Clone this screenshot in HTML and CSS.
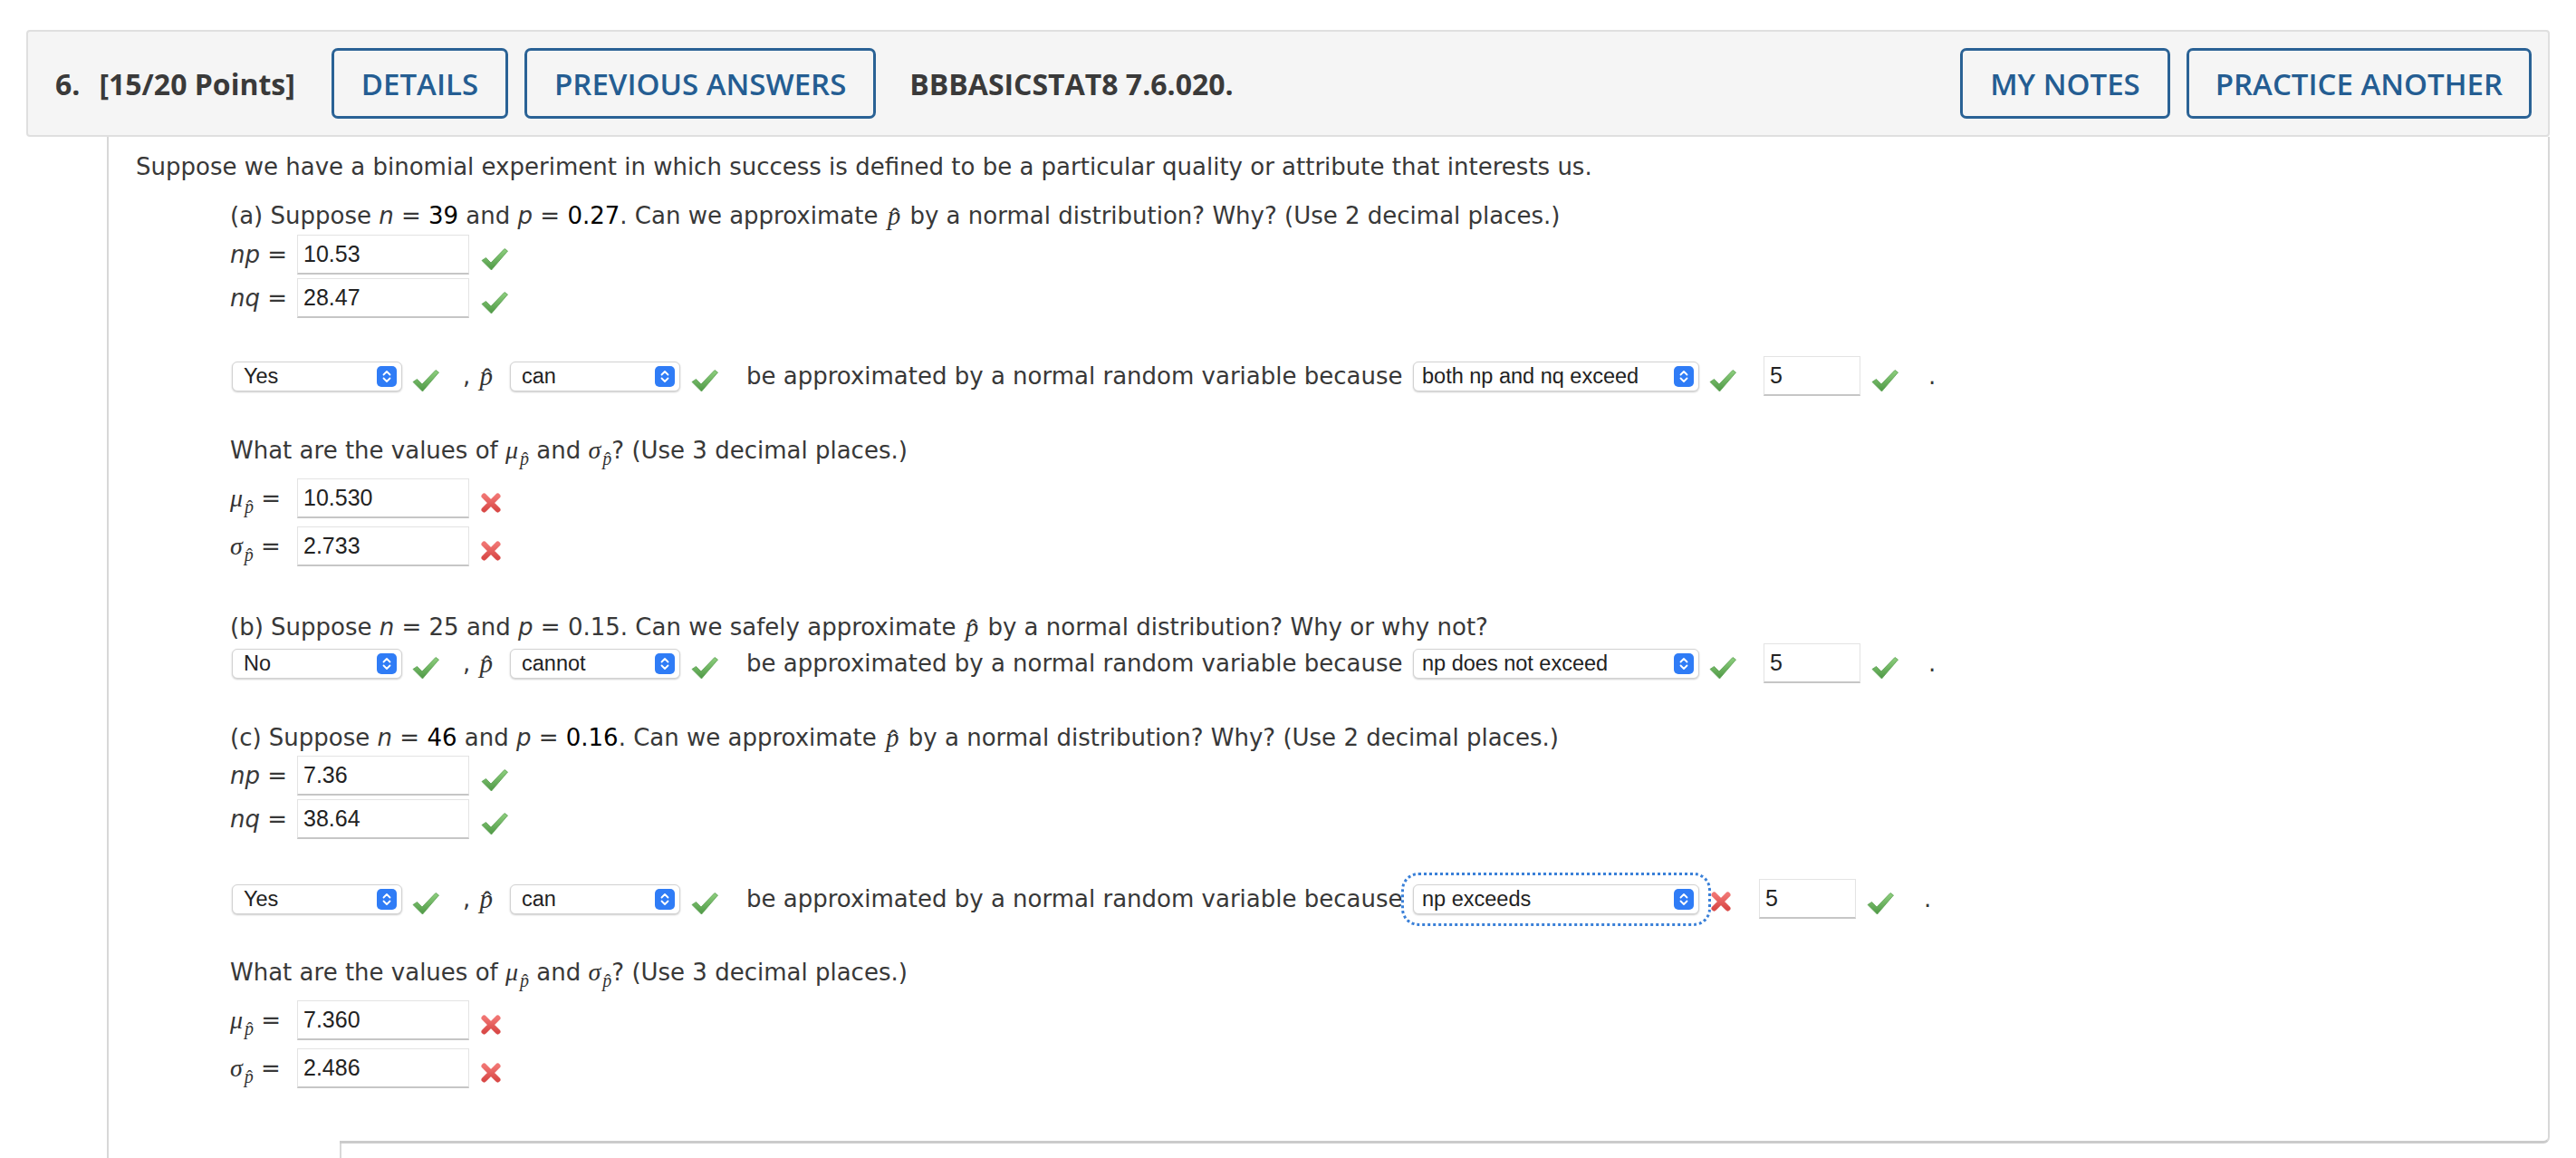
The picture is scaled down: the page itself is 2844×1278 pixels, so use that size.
FILE: index.html
```html
<!DOCTYPE html>
<html>
<head>
<meta charset="utf-8">
<title>Question 6</title>
<link rel="stylesheet" href="styles.css">
</head>
<body>
<div class="question">
  <div class="q-header">
    <div class="q-num"><span class="q-n">6.</span><span>[15/20 Points]</span></div>
    <button class="btn btn-first">DETAILS</button>
    <button class="btn">PREVIOUS ANSWERS</button>
    <div class="q-id">BBBASICSTAT8 7.6.020.</div>
    <div class="spacer"></div>
    <button class="btn">MY NOTES</button>
    <button class="btn btn-last">PRACTICE ANOTHER</button>
  </div>

  <div class="q-body">
    <div class="main">
      <div class="t-row">Suppose we have a binomial experiment in which success is defined to be a particular quality or attribute that interests us.</div>
      <div class="sub">
        <!-- (a) -->
        <div class="t-row mt22">(a) Suppose&nbsp;<i>n</i>&nbsp;=&nbsp;<span class="dk">39</span>&nbsp;and&nbsp;<i>p</i>&nbsp;=&nbsp;<span class="dk">0.27</span>. Can we approximate&nbsp;<span class="pv"><span class="hat">p</span></span>&nbsp;by a normal distribution? Why? (Use 2 decimal places.)</div>
        <div class="f-row mt5"><span class="lbl"><i>np</i>&nbsp;=</span><input class="ans" value="10.53" readonly><svg class="ok" viewBox="0 0 32 26"><use href="#chk"/></svg></div>
        <div class="f-row mt4"><span class="lbl"><i>nq</i>&nbsp;=</span><input class="ans" value="28.47" readonly><svg class="ok" viewBox="0 0 32 26"><use href="#chk"/></svg></div>

        <div class="d-row mt42">
          <div class="sel"><span>Yes</span><svg class="step" viewBox="0 0 22 23"><use href="#stp"/></svg></div>
          <svg class="ok ok-s" viewBox="0 0 32 26"><use href="#chk"/></svg>
          <span class="cp">,&nbsp;<span class="pv"><span class="hat">p</span></span></span>
          <div class="sel"><span>can</span><svg class="step" viewBox="0 0 22 23"><use href="#stp"/></svg></div>
          <svg class="ok ok-s2" viewBox="0 0 32 26"><use href="#chk"/></svg>
          <span class="because">be approximated by a normal random variable because</span>
          <div class="sel sel-wide"><span>both np and nq exceed</span><svg class="step" viewBox="0 0 22 23"><use href="#stp"/></svg></div>
          <svg class="ok ok-s" viewBox="0 0 32 26"><use href="#chk"/></svg>
          <input class="ans ans-sm" value="5" readonly>
          <svg class="ok ok-s2" viewBox="0 0 32 26"><use href="#chk"/></svg>
          <span class="dot">.</span>
        </div>

        <div class="t-row mt44">What are the values of&nbsp;<span class="mv">μ</span><span class="ms"><span class="hat">p</span></span>&nbsp;and&nbsp;<span class="mv">σ</span><span class="ms"><span class="hat">p</span></span>? (Use 3 decimal places.)</div>
        <div class="f-row mt15"><span class="lbl"><span class="mv">μ</span><span class="ms"><span class="hat">p</span></span>&nbsp;=</span><input class="ans" value="10.530" readonly><svg class="bad" viewBox="0 0 24 24"><use href="#xx"/></svg></div>
        <div class="f-row mt9"><span class="lbl"><span class="mv">σ</span><span class="ms"><span class="hat">p</span></span>&nbsp;=</span><input class="ans" value="2.733" readonly><svg class="bad" viewBox="0 0 24 24"><use href="#xx"/></svg></div>

        <!-- (b) -->
        <div class="t-row mt51">(b) Suppose&nbsp;<i>n</i>&nbsp;=&nbsp;25 and&nbsp;<i>p</i>&nbsp;=&nbsp;0.15. Can we safely approximate&nbsp;<span class="pv"><span class="hat">p</span></span>&nbsp;by a normal distribution? Why or why not?</div>
        <div class="d-row mt2">
          <div class="sel"><span>No</span><svg class="step" viewBox="0 0 22 23"><use href="#stp"/></svg></div>
          <svg class="ok ok-s" viewBox="0 0 32 26"><use href="#chk"/></svg>
          <span class="cp">,&nbsp;<span class="pv"><span class="hat">p</span></span></span>
          <div class="sel"><span>cannot</span><svg class="step" viewBox="0 0 22 23"><use href="#stp"/></svg></div>
          <svg class="ok ok-s2" viewBox="0 0 32 26"><use href="#chk"/></svg>
          <span class="because">be approximated by a normal random variable because</span>
          <div class="sel sel-wide"><span>np does not exceed</span><svg class="step" viewBox="0 0 22 23"><use href="#stp"/></svg></div>
          <svg class="ok ok-s" viewBox="0 0 32 26"><use href="#chk"/></svg>
          <input class="ans ans-sm" value="5" readonly>
          <svg class="ok ok-s2" viewBox="0 0 32 26"><use href="#chk"/></svg>
          <span class="dot">.</span>
        </div>

        <!-- (c) -->
        <div class="t-row mt44">(c) Suppose&nbsp;<i>n</i>&nbsp;=&nbsp;<span class="dk">46</span>&nbsp;and&nbsp;<i>p</i>&nbsp;=&nbsp;<span class="dk">0.16</span>. Can we approximate&nbsp;<span class="pv"><span class="hat">p</span></span>&nbsp;by a normal distribution? Why? (Use 2 decimal places.)</div>
        <div class="f-row mt4"><span class="lbl"><i>np</i>&nbsp;=</span><input class="ans" value="7.36" readonly><svg class="ok" viewBox="0 0 32 26"><use href="#chk"/></svg></div>
        <div class="f-row mt4"><span class="lbl"><i>nq</i>&nbsp;=</span><input class="ans" value="38.64" readonly><svg class="ok" viewBox="0 0 32 26"><use href="#chk"/></svg></div>

        <div class="d-row mt44">
          <div class="sel"><span>Yes</span><svg class="step" viewBox="0 0 22 23"><use href="#stp"/></svg></div>
          <svg class="ok ok-s" viewBox="0 0 32 26"><use href="#chk"/></svg>
          <span class="cp">,&nbsp;<span class="pv"><span class="hat">p</span></span></span>
          <div class="sel"><span>can</span><svg class="step" viewBox="0 0 22 23"><use href="#stp"/></svg></div>
          <svg class="ok ok-s2" viewBox="0 0 32 26"><use href="#chk"/></svg>
          <span class="because">be approximated by a normal random variable because</span>
          <div class="sel sel-wide focused"><span>np exceeds</span><svg class="step" viewBox="0 0 22 23"><use href="#stp"/></svg></div>
          <svg class="bad bad-s" viewBox="0 0 24 24"><use href="#xx"/></svg>
          <input class="ans ans-sm ans-c" value="5" readonly>
          <svg class="ok ok-s2" viewBox="0 0 32 26"><use href="#chk"/></svg>
          <span class="dot">.</span>
        </div>

        <div class="t-row mt43">What are the values of&nbsp;<span class="mv">μ</span><span class="ms"><span class="hat">p</span></span>&nbsp;and&nbsp;<span class="mv">σ</span><span class="ms"><span class="hat">p</span></span>? (Use 3 decimal places.)</div>
        <div class="f-row mt15"><span class="lbl"><span class="mv">μ</span><span class="ms"><span class="hat">p</span></span>&nbsp;=</span><input class="ans" value="7.360" readonly><svg class="bad" viewBox="0 0 24 24"><use href="#xx"/></svg></div>
        <div class="f-row mt9"><span class="lbl"><span class="mv">σ</span><span class="ms"><span class="hat">p</span></span>&nbsp;=</span><input class="ans" value="2.486" readonly><svg class="bad" viewBox="0 0 24 24"><use href="#xx"/></svg></div>
      </div>
    </div>
    <div class="foot"></div>
    <div class="next"></div>
  </div>
</div>

<svg class="defs" width="0" height="0" aria-hidden="true">
  <defs>
    <linearGradient id="gchk" x1="0" y1="0" x2="0" y2="1">
      <stop offset="0" stop-color="#8fd07f"/>
      <stop offset="1" stop-color="#4e9845"/>
    </linearGradient>
    <linearGradient id="gx" x1="0" y1="0" x2="0" y2="1">
      <stop offset="0" stop-color="#f07472"/>
      <stop offset="1" stop-color="#d94a48"/>
    </linearGradient>
    <symbol id="chk" viewBox="0 0 32 26">
      <path d="M2 14.5 L6.5 11.5 L12 17 L27 1.5 L30.5 4 L12.5 25 Z" fill="url(#gchk)" stroke="#5a9f50" stroke-width="0.8" stroke-linejoin="round"/>
    </symbol>
    <symbol id="xx" viewBox="0 0 24 24">
      <path d="M4.5 4.5 L19.5 19.5 M19.5 4.5 L4.5 19.5" stroke="url(#gx)" stroke-width="6" stroke-linecap="round" fill="none"/>
    </symbol>
    <symbol id="stp" viewBox="0 0 22 23">
      <rect x="0" y="0" width="22" height="23" rx="5" fill="#2f7cf6"/>
      <path d="M7.5 9.5 L11 6 L14.5 9.5 M7.5 13.5 L11 17 L14.5 13.5" stroke="#fff" stroke-width="1.8" fill="none" stroke-linecap="round" stroke-linejoin="round"/>
    </symbol>
  </defs>
</svg>
</body>
</html>
```

FILE: styles.css
```css
html, body {
  margin: 0;
  padding: 0;
  background: #ffffff;
}

body {
  font-family: "DejaVu Sans", Verdana, sans-serif;
  font-size: 26px;
  color: #383838;
  overflow: hidden;
}

.defs {
  position: absolute;
  width: 0;
  height: 0;
}

.question {
  margin: 33px 29px 0 29px;
}

/* ---------- header ---------- */
.q-header {
  display: flex;
  align-items: center;
  box-sizing: border-box;
  height: 118px;
  background: #f5f5f5;
  border: 2px solid #dfdfdf;
  border-radius: 4px;
  padding: 0 18px 0 30px;
  font-family: "Open Sans", "Liberation Sans", sans-serif;
}

.q-num {
  display: flex;
  font-weight: 700;
  font-size: 32px;
  color: #3a3a3a;
}

.q-n {
  margin-right: 21px;
}

.btn {
  box-sizing: border-box;
  height: 78px;
  margin: 0 0 0 18px;
  padding: 0 30px;
  border: 3px solid #2a6295;
  border-radius: 7px;
  background: transparent;
  color: #245d92;
  font-family: "Open Sans", "Liberation Sans", sans-serif;
  font-weight: 600;
  font-size: 33px;
  white-space: nowrap;
}

.btn-first {
  margin-left: 40px;
}

.btn-last {
  margin-left: 18px;
  padding: 0 29px;
}

.q-id {
  margin-left: 37px;
  font-weight: 700;
  font-size: 32px;
  color: #3a3a3a;
}

.spacer {
  flex: 1;
}

/* ---------- body ---------- */
.q-body {
  margin-left: 89px;
  border-left: 2px solid #d8d8d8;
}

.main {
  border-right: 2px solid #d8d8d8;
  padding: 17px 0 40px 30px;
}

.foot {
  margin-left: 255px;
  height: 18px;
  border-right: 2px solid #d8d8d8;
  border-bottom: 3px solid #cbcbcb;
  border-bottom-right-radius: 7px;
}

.next {
  margin-left: 255px;
  height: 20px;
  border-left: 2px solid #d8d8d8;
}

.sub {
  margin-left: 104px;
}

.t-row {
  display: flex;
  align-items: center;
  height: 32px;
  white-space: nowrap;
}

.t-row i,
.lbl i {
  font-style: oblique;
}

.dk {
  color: #000;
}

.f-row {
  display: flex;
  align-items: center;
  height: 44px;
}

.d-row {
  display: flex;
  align-items: center;
  height: 44px;
  white-space: nowrap;
}

.mt2 { margin-top: 2px; }
.mt4 { margin-top: 4px; }
.mt5 { margin-top: 5px; }
.mt9 { margin-top: 9px; }
.mt15 { margin-top: 15px; }
.mt22 { margin-top: 22px; }
.mt42 { margin-top: 42px; }
.mt43 { margin-top: 43px; }
.mt44 { margin-top: 44px; }
.mt51 { margin-top: 51px; }

.lbl {
  display: inline-flex;
  align-items: center;
  width: 74px;
  flex: none;
  white-space: nowrap;
}

/* math */
.pv {
  font-family: "Liberation Serif", "Times New Roman", serif;
  font-style: italic;
  font-size: 29px;
  color: #333;
  margin: 0 2px;
}

.hat {
  position: relative;
  display: inline-block;
}

.hat::before {
  content: "\02C6";
  position: absolute;
  left: 0.08em;
  right: 0;
  top: 0.08em;
  text-align: center;
  font-style: normal;
}

.mv {
  font-family: "Liberation Serif", "Times New Roman", serif;
  font-style: italic;
  font-size: 28px;
  color: #333;
}

.ms {
  font-family: "Liberation Serif", "Times New Roman", serif;
  font-style: italic;
  font-size: 20px;
  color: #333;
  position: relative;
  top: 9px;
  margin-left: 2px;
}

/* inputs */
.ans {
  box-sizing: border-box;
  width: 190px;
  height: 44px;
  margin: 0;
  padding: 0 6px;
  border: 1px solid #e3e3e3;
  border-bottom: 2px solid #c6c6c6;
  border-radius: 0;
  background: #fff;
  font-family: "Liberation Sans", Arial, sans-serif;
  font-size: 25px;
  color: #222;
  outline: none;
  flex: none;
}

.ans-sm {
  width: 107px;
  margin-left: 29px;
}

.ans-c {
  margin-left: 30px;
}

/* selects */
.sel {
  display: flex;
  align-items: center;
  justify-content: space-between;
  box-sizing: border-box;
  width: 188px;
  height: 33px;
  margin-left: 2px;
  padding: 0 5px 0 12px;
  border: 1px solid #d2d2d2;
  border-radius: 6px;
  background: #fff;
  box-shadow: 0 1px 2px rgba(0, 0, 0, 0.2);
  font-family: "Liberation Sans", Arial, sans-serif;
  font-size: 23.5px;
  color: #222;
  flex: none;
}

.sel-wide {
  width: 316px;
  margin-left: 14px;
  padding-left: 9px;
}

.focused {
  outline: 3px dotted #3a80d8;
  outline-offset: 10px;
}

.step {
  width: 22px;
  height: 23px;
  flex: none;
}

/* icons */
.ok {
  width: 32px;
  height: 26px;
  margin-left: 12px;
  margin-top: 10px;
  flex: none;
}

.ok-s {
  margin-left: 10px;
}

.ok-s2 {
  margin-left: 11px;
}

.bad {
  width: 24px;
  height: 24px;
  margin-left: 12px;
  margin-top: 10px;
  flex: none;
}

.bad-s {
  margin-left: 12px;
  margin-top: 6px;
}

.cp {
  display: inline-flex;
  align-items: center;
  box-sizing: border-box;
  width: 75px;
  padding-left: 25px;
  flex: none;
}

.because {
  margin-left: 30px;
  width: 722px;
  flex: none;
}

.dot {
  margin-left: 32px;
}
```
